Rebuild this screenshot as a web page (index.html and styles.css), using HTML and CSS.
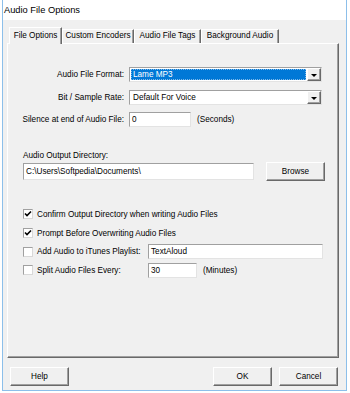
FILE: index.html
```html
<!doctype html>
<html lang="en">
<head>
    <meta charset="utf-8">
    <title>Audio File Options</title>
    <link rel="stylesheet" href="styles.css">
</head>
<body>
    <div class="window">
        <div class="titlebar">Audio File Options</div>
        <div class="client">
            <div class="tabs">
                <div class="tab tab-file active">File Options</div>
                <div class="tab tab-enc">Custom Encoders</div>
                <div class="tab tab-tags">Audio File Tags</div>
                <div class="tab tab-bg">Background Audio</div>
            </div>

            <div class="panel">
                <div class="row row-format">
                    <span class="lbl">Audio File Format:</span>
                    <div class="select">
                        <span class="value picked">Lame MP3</span>
                        <span class="arrow"></span>
                    </div>
                </div>
                <div class="row row-rate">
                    <span class="lbl">Bit / Sample Rate:</span>
                    <div class="select">
                        <span class="value">Default For Voice</span>
                        <span class="arrow"></span>
                    </div>
                </div>
                <div class="row row-silence">
                    <span class="lbl">Silence at end of Audio File:</span>
                    <div class="input input-small">0</div>
                    <span class="unit">(Seconds)</span>
                </div>

                <div class="dir-label">Audio Output Directory:</div>
                <div class="dir-row">
                    <div class="input input-dir">C:\Users\Softpedia\Documents\</div>
                    <div class="btn">Browse</div>
                </div>

                <div class="checks">
                    <div class="check-row">
                        <span class="box checked"><svg width="8" height="8" viewBox="0 0 8 8"><path d="M1 3.5 L3 5.5 L7 1.5" fill="none" stroke="#000" stroke-width="1.6"/></svg></span>
                        <span>Confirm Output Directory when writing Audio Files</span>
                    </div>
                    <div class="check-row">
                        <span class="box checked"><svg width="8" height="8" viewBox="0 0 8 8"><path d="M1 3.5 L3 5.5 L7 1.5" fill="none" stroke="#000" stroke-width="1.6"/></svg></span>
                        <span>Prompt Before Overwriting Audio Files</span>
                    </div>
                    <div class="check-row">
                        <span class="box"></span>
                        <span class="check-lbl">Add Audio to iTunes Playlist:</span>
                        <div class="input input-playlist">TextAloud</div>
                    </div>
                    <div class="check-row">
                        <span class="box"></span>
                        <span class="check-lbl">Split Audio Files Every:</span>
                        <div class="input input-split">30</div>
                        <span class="unit">(Minutes)</span>
                    </div>
                </div>
            </div>

            <div class="buttons">
                <div class="btn">Help</div>
                <div class="spacer"></div>
                <div class="btn btn-ok">OK</div>
                <div class="btn">Cancel</div>
            </div>
        </div>
    </div>
</body>
</html>
```

FILE: styles.css
```css
*,
*::after,
*::before {
  box-sizing: border-box;
}

body {
  margin: 0;
  background: #fff;
  font-family: 'Liberation Sans', Arial, sans-serif;
  font-size: 8.2px;
  color: #000;
}

.window {
  margin-left: 2px;
  width: 345px;
  border: 1px solid #8cbfea;
  border-top: none;
}

.titlebar {
  height: 20px;
  line-height: 20px;
  background: #fff;
  font-size: 9.3px;
  padding-left: 1px;
}

.client {
  height: 370px;
  background: #f0f0f0;
}

/* tabs */
.tabs {
  display: flex;
  align-items: flex-end;
  height: 23px;
  padding-left: 6px;
}

.tab {
  height: 14px;
  line-height: 12px;
  text-align: center;
  border: 1px solid #fff;
  border-bottom: none;
  border-right-color: #696969;
  box-shadow: inset -1px 0 #a0a0a0;
  white-space: nowrap;
}

.tab.active {
  position: relative;
  z-index: 1;
  height: 17px;
  line-height: 15px;
  margin-bottom: -1px;
  background: #f0f0f0;
}

.tab-file { width: 53px; }
.tab-enc { width: 72px; }
.tab-tags { width: 67px; }
.tab-bg { width: 78px; }

/* panel */
.panel {
  margin-left: 4px;
  width: 332px;
  height: 315px;
  border: 1px solid #fff;
  border-right-color: #696969;
  border-bottom-color: #696969;
  box-shadow: inset -1px -1px #a0a0a0;
  padding-top: 23px;
}

.row {
  display: flex;
  align-items: center;
  height: 15px;
  padding-left: 12px;
}

.row-format { margin-bottom: 8px; }
.row-rate { margin-bottom: 7px; }

.lbl {
  width: 104px;
  text-align: right;
  margin-right: 5px;
  white-space: nowrap;
}

.select {
  width: 193px;
  height: 15px;
  display: flex;
  background: #fff;
  border: 1px solid #a0a0a0;
  border-right-color: #e3e3e3;
  border-bottom-color: #e3e3e3;
}

.value {
  flex: 1;
  margin: 1px;
  padding-left: 2px;
  line-height: 11px;
  white-space: nowrap;
}

.value.picked {
  background: #0078d7;
  color: #fff;
  outline: 1px dotted #7fb8e8;
  outline-offset: -1px;
}

.arrow {
  width: 14px;
  background: #f0f0f0;
  border: 1px solid #fff;
  border-right-color: #696969;
  border-bottom-color: #696969;
  box-shadow: inset -1px -1px #a0a0a0;
  display: flex;
  align-items: center;
  justify-content: center;
}

.arrow::after {
  content: "";
  border-left: 3px solid transparent;
  border-right: 3px solid transparent;
  border-top: 3px solid #000;
  margin-top: 1px;
}

.input {
  height: 15px;
  line-height: 13px;
  padding-left: 2px;
  background: #fff;
  border: 1px solid #a0a0a0;
  border-right-color: #e3e3e3;
  border-bottom-color: #e3e3e3;
  white-space: nowrap;
}

.input-small { width: 62px; }
.input-dir { width: 231px; height: 17px; line-height: 15px; }
.input-playlist { width: 175px; }
.input-split { width: 49px; }

.unit {
  margin-left: 6px;
}

.dir-label {
  margin-top: 24px;
  padding-left: 15px;
  height: 11px;
  line-height: 10px;
}

.dir-row {
  display: flex;
  align-items: center;
  height: 19px;
  padding-left: 15px;
}

.dir-row .btn {
  margin-left: 12px;
}

/* checkboxes */
.checks {
  margin-top: 24px;
  padding-left: 15px;
}

.check-row {
  display: flex;
  align-items: center;
  height: 18.7px;
  white-space: nowrap;
}

.box {
  width: 10px;
  height: 10px;
  margin-right: 4px;
  background: #fff;
  border: 1px solid #a0a0a0;
  border-right-color: #d8d8d8;
  border-bottom-color: #d8d8d8;
  display: flex;
  align-items: center;
  justify-content: center;
}

.check-lbl {
  width: 111px;
}

/* buttons */
.btn {
  width: 59px;
  height: 19px;
  line-height: 17px;
  text-align: center;
  background: #f0f0f0;
  border: 1px solid #fff;
  border-right-color: #696969;
  border-bottom-color: #696969;
  box-shadow: inset -1px -1px #a0a0a0;
}

.buttons {
  display: flex;
  margin-top: 9px;
  padding-left: 7px;
  padding-right: 8px;
}

.spacer {
  flex: 1;
}

.btn-ok {
  margin-right: 7px;
}
```
